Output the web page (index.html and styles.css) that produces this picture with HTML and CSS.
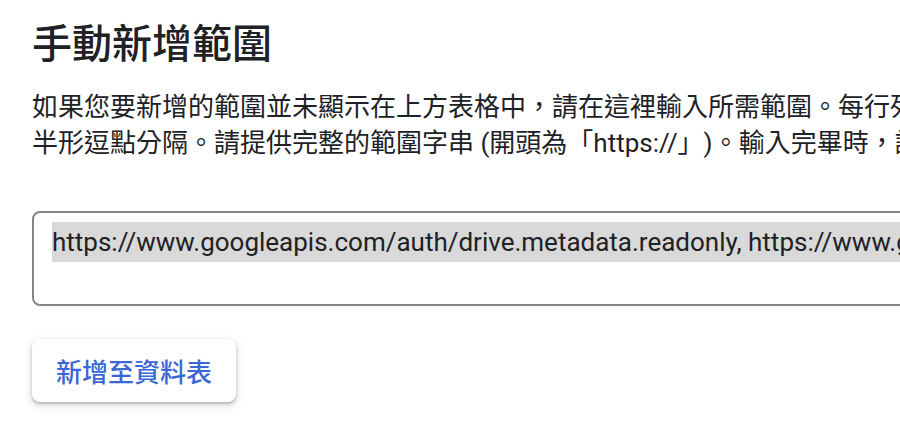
FILE: index.html
```html
<!DOCTYPE html>
<html lang="zh-Hant">
<head>
<meta charset="utf-8">
<title>手動新增範圍</title>
<link rel="stylesheet" href="styles.css">
</head>
<body>
<main class="page">
  <h1 class="title">手動新增範圍</h1>
  <p class="desc"><span class="line">如果您要新增的範圍並未顯示在上方表格中，請在這裡輸入所需範圍。每行列出一個範圍，或以</span><span class="line">半形逗點分隔。請提供完整的範圍字串 (開頭為「https://」)。輸入完畢時，請按一下 [新增至資料表]。</span></p>
  <div class="scope-input"><span class="sel">https://www.googleapis.com/auth/drive.metadata.readonly, https://www.googleapis.com/auth/drive.file</span></div>
  <button class="add-btn" type="button">新增至資料表</button>
</main>
</body>
</html>
```

FILE: styles.css
```css
html {
  overflow: hidden;
  background: #ffffff;
}

body {
  margin: 0;
  padding: 0;
  min-height: 100vh;
  font-family: Roboto, "Noto Sans CJK TC", sans-serif;
  color: #202124;
  text-spacing-trim: space-all;
}

.page {
  width: 1400px;
  padding: 0 0 0 32px;
  display: flex;
  flex-direction: column;
  align-items: flex-start;
}

.title {
  margin: 17px 0 0 0;
  font-size: 40px;
  line-height: 48px;
  font-weight: 500;
  font-family: "Noto Sans CJK TC", sans-serif;
}

.desc {
  margin: 24px 0 0 0;
  font-size: 26px;
  line-height: 36px;
  font-weight: 400;
  display: flex;
  flex-direction: column;
}

.line {
  white-space: nowrap;
}

.scope-input {
  box-sizing: border-box;
  width: 1100px;
  height: 95px;
  margin-top: 50px;
  border: 2px solid #80868b;
  border-radius: 8px;
  padding: 9px 18px;
  font-size: 26px;
  line-height: 40px;
  white-space: nowrap;
  overflow: hidden;
  color: #202124;
}

.sel {
  display: inline-block;
  background: #d9d9d9;
  line-height: 40px;
}

.add-btn {
  margin-top: 33px;
  width: 204px;
  height: 63px;
  border: none;
  border-radius: 8px;
  background: #ffffff;
  box-shadow: 0 2px 3px rgba(60, 64, 67, 0.3), 0 3px 8px 1px rgba(60, 64, 67, 0.15);
  color: #3b66d6;
  font-family: Roboto, "Noto Sans CJK TC", sans-serif;
  font-size: 26px;
  font-weight: 500;
  padding: 0;
  cursor: pointer;
}
```
